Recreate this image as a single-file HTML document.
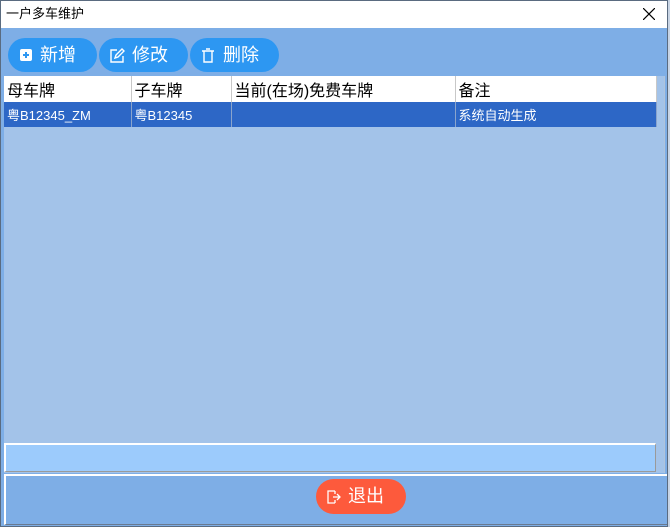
<!DOCTYPE html>
<html><head><meta charset="utf-8"><style>
*{margin:0;padding:0;box-sizing:border-box}
body{width:670px;height:527px;background:#c8d4e4;font-family:"Liberation Sans","Noto Sans CJK SC",sans-serif;position:relative;overflow:hidden}
.win{position:absolute;left:0;top:0;width:668px;height:527px;background:#7eaee6;border:1px solid #5a6b80}
.title{position:absolute;left:0;top:0;width:666px;height:27px;background:#fff;font-size:13px;line-height:26px;padding-left:5px;color:#000}
.btn{position:absolute;top:37px;height:34px;border-radius:17px;background:#2d97f2;color:#fff;font-size:18px;line-height:34px}
.grid{position:absolute;left:3px;top:75px;width:661px;height:397px;background:#a3c3e9;border-right:1px solid #b0c4dc}
table{position:absolute;left:0;top:0;border-collapse:collapse;table-layout:fixed;width:652px}
td{border-right:1px solid #c8c8c8;white-space:nowrap;overflow:hidden;padding-left:3px}
.h td{background:#fff;height:26px;font-size:16px;color:#000}
.r td{background:#2d67c6;height:25px;font-size:13px;color:#fff;border-right:1px solid #8aa4cc}
.tb{position:absolute;left:3px;top:442px;width:652px;height:29px;background:#9ccbfc;border:1px solid #9a9a9a;border-top:2px solid #fff;border-left:2px solid #fff}
.foot{position:absolute;left:3px;top:473px;width:663px;height:51px;background:#7eaee6;border-top:2px solid #fff;border-left:2px solid #fff;border-bottom:1px solid #6a7a90}
.exit{position:absolute;left:315px;top:478px;width:90px;height:35px;border-radius:18px;background:#fd5a3c;color:#fff;font-size:18px;line-height:35px}
</style></head><body>
<div class="win">
<div class="title">一户多车维护<svg style="position:absolute;right:12px;top:7px" width="12" height="12" stroke="#000" stroke-width="1.2"><path d="M0 0L12 12M12 0L0 12"/></svg></div>
<div class="btn" style="left:7px;width:89px"><svg style="position:absolute;left:11px;top:10px" width="14" height="14"><rect x="1" y="1" width="12" height="12" rx="2" fill="#fff"/><path d="M7 4v6M4 7h6" stroke="#2d97f2" stroke-width="2"/></svg><span style="position:absolute;left:32px">新增</span></div>
<div class="btn" style="left:98px;width:89px"><svg style="position:absolute;left:10px;top:10px" width="16" height="16" fill="none" stroke="#fff" stroke-width="1.4"><path d="M8 2H2v12h12V8"/><path d="M6 10l1-3 6-6 2 2-6 6z"/></svg><span style="position:absolute;left:33px">修改</span></div>
<div class="btn" style="left:189px;width:89px"><svg style="position:absolute;left:11px;top:10px" width="14" height="15" fill="none" stroke="#fff" stroke-width="1.4"><path d="M1 3h12M5 1h4M3 3v11h8V3"/></svg><span style="position:absolute;left:33px">删除</span></div>
<div class="grid">
<table>
<colgroup><col style="width:127px"><col style="width:100px"><col style="width:224px"><col style="width:201px"></colgroup>
<tr class="h"><td>母车牌</td><td>子车牌</td><td>当前(在场)免费车牌</td><td>备注</td></tr>
<tr class="r"><td>粤B12345_ZM</td><td>粤B12345</td><td></td><td>系统自动生成</td></tr>
</table>
</div>
<div class="tb"></div>
<div class="foot"></div>
<div class="exit"><svg style="position:absolute;left:11px;top:11px" width="14" height="14" fill="none" stroke="#fff" stroke-width="1.3"><path d="M8 1H1v12h7M8 1l0 3M8 13v-3M6 7h7M10 4l3 3-3 3"/></svg><span style="position:absolute;left:32px">退出</span></div>
</div>
</body></html>
